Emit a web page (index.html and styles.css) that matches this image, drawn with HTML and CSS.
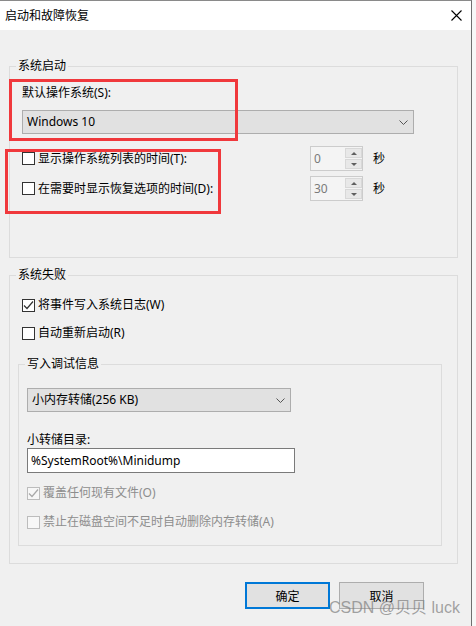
FILE: index.html
```html
<!DOCTYPE html>
<html lang="zh-CN">
<head>
<meta charset="utf-8">
<title>启动和故障恢复</title>
<link rel="stylesheet" href="styles.css">
</head>
<body>
<div class="window">
  <div class="titlebar">
    <span class="title">启动和故障恢复</span>
    <svg class="close" width="11" height="11" viewBox="0 0 11 11"><path d="M0.5 0.5 L10.5 10.5 M10.5 0.5 L0.5 10.5" stroke="#000" stroke-width="1.1" fill="none"/></svg>
  </div>
  <div class="body">
    <fieldset class="group group-startup">
      <legend>系统启动</legend>
      <div class="field-label">默认操作系统(S):</div>
      <div class="select select-os">
        <span>Windows 10</span>
        <svg class="chev" width="9" height="5" viewBox="0 0 9 5"><polyline points="0.5,0.5 4.5,4.5 8.5,0.5" fill="none" stroke="#555" stroke-width="1"/></svg>
      </div>
      <div class="timer-row first">
        <div class="check"><span class="box"></span><span>显示操作系统列表的时间(T):</span></div>
        <div class="spin"><span class="spin-value">0</span><div class="spin-buttons"><span class="spin-btn"><i class="arrow up"></i></span><span class="spin-btn"><i class="arrow down"></i></span></div></div>
        <span class="unit">秒</span>
      </div>
      <div class="timer-row second">
        <div class="check"><span class="box"></span><span>在需要时显示恢复选项的时间(D):</span></div>
        <div class="spin"><span class="spin-value">30</span><div class="spin-buttons"><span class="spin-btn"><i class="arrow up"></i></span><span class="spin-btn"><i class="arrow down"></i></span></div></div>
        <span class="unit">秒</span>
      </div>
    </fieldset>

    <fieldset class="group group-failure">
      <legend>系统失败</legend>
      <div class="check row-w"><span class="box checked"><svg width="11" height="11" viewBox="0 0 11 11"><polyline points="1,5.5 4,8.5 10,1.5" fill="none" stroke="#333" stroke-width="1.2"/></svg></span><span>将事件写入系统日志(W)</span></div>
      <div class="check row-r"><span class="box"></span><span>自动重新启动(R)</span></div>

      <fieldset class="group group-debug">
        <legend>写入调试信息</legend>
        <div class="select select-dump">
          <span>小内存转储(256 KB)</span>
          <svg class="chev" width="9" height="5" viewBox="0 0 9 5"><polyline points="0.5,0.5 4.5,4.5 8.5,0.5" fill="none" stroke="#555" stroke-width="1"/></svg>
        </div>
        <div class="field-label dir-label">小转储目录:</div>
        <div class="textbox">%SystemRoot%\Minidump</div>
        <div class="check disabled row-o"><span class="box checked"><svg width="11" height="11" viewBox="0 0 11 11"><polyline points="1,5.5 4,8.5 10,1.5" fill="none" stroke="#a8a8a8" stroke-width="1.2"/></svg></span><span>覆盖任何现有文件(O)</span></div>
        <div class="check disabled row-a"><span class="box"></span><span>禁止在磁盘空间不足时自动删除内存转储(A)</span></div>
      </fieldset>
    </fieldset>

    <div class="actions">
      <button class="btn btn-primary">确定</button>
      <button class="btn">取消</button>
    </div>
  </div>
  <div class="annot annot-1"></div>
  <div class="annot annot-2"></div>
  <div class="watermark">CSDN @贝贝 luck</div>
</div>
</body>
</html>
```

FILE: styles.css
```css
html, body {
  margin: 0;
  padding: 0;
  background: #f7f7f7;
}
body {
  font-family: "Noto Sans", "Noto Sans CJK SC", sans-serif;
  font-size: 12px;
  line-height: 16px;
  color: #000;
}
.window {
  position: relative;
  width: 472px;
  height: 626px;
  box-sizing: border-box;
  background: #f0f0f0;
  border-top: 1px solid #8a8a8a;
  border-right: 1px solid #6f6f6f;
  overflow: hidden;
}
.titlebar {
  height: 29px;
  background: #fff;
  display: flex;
  align-items: center;
  justify-content: space-between;
  padding: 0 9px 0 5px;
}
.title {
  font-size: 12px;
  line-height: 16px;
}
.close {
  display: block;
}
.body {
  padding: 0 13px 0 9px;
}
.group {
  margin: 0;
  padding: 0;
  border: 1px solid #dcdcdc;
  min-width: 0;
}
.group > legend {
  padding: 0 2px;
  margin-left: -6px;
  line-height: 16px;
  font-size: 12px;
}
.group-startup {
  margin-top: 28px;
  padding: 0 0 56px 12px;
}
.field-label {
  margin-top: 11px;
  line-height: 16px;
}
.select {
  box-sizing: border-box;
  height: 24px;
  background: #e1e1e1;
  border: 1px solid #adadad;
  display: flex;
  align-items: center;
  justify-content: space-between;
  padding: 0 5px 0 4px;
}
.select-os {
  margin-top: 9px;
  width: 392px;
}
.chev {
  display: block;
}
.timer-row {
  display: flex;
  align-items: center;
  height: 25px;
}
.timer-row.first { margin-top: 12px; }
.timer-row.second { margin-top: 5px; }
.timer-row .check {
  width: 288px;
}
.check {
  display: flex;
  align-items: center;
  height: 16px;
  white-space: nowrap;
}
.box {
  box-sizing: border-box;
  width: 13px;
  height: 13px;
  border: 1px solid #333;
  background: #fff;
  margin-right: 3px;
  flex: none;
  display: flex;
  align-items: center;
  justify-content: center;
}
.box svg { display: block; }
.check.disabled { color: #8d8d8d; }
.check.disabled .box {
  border-color: #bcbcbc;
  background: #f7f7f7;
}
.spin {
  box-sizing: border-box;
  width: 53px;
  height: 25px;
  border: 1px solid #cccccc;
  background: #f4f4f4;
  display: flex;
  align-items: stretch;
}
.spin-value {
  flex: 1;
  padding-left: 3px;
  color: #7a7a7a;
  line-height: 23px;
}
.spin-buttons {
  width: 17px;
  display: flex;
  flex-direction: column;
  padding: 1px 0;
  gap: 1px;
}
.spin-btn {
  flex: 1;
  box-sizing: border-box;
  border: 1px solid #d8d8d8;
  background: #e8e8e8;
  display: flex;
  align-items: center;
  justify-content: center;
}
.arrow {
  width: 0;
  height: 0;
  border-left: 3px solid transparent;
  border-right: 3px solid transparent;
}
.arrow.up { border-bottom: 3px solid #606060; }
.arrow.down { border-top: 3px solid #606060; }
.unit {
  margin-left: 10px;
}
.group-failure {
  margin-top: 9px;
  padding: 0 15px 17px 12px;
}
.row-w { margin-top: 14px; }
.row-r { margin-top: 12px; }
.group-debug {
  margin: 15px 0 0 -4px;
  padding: 0 0 15px 8px;
}
.group-debug > legend {
  margin-left: -2px;
}
.select-dump {
  margin-top: 16px;
  width: 264px;
}
.dir-label {
  margin-top: 20px;
}
.textbox {
  box-sizing: border-box;
  width: 268px;
  height: 25px;
  background: #fff;
  border: 1px solid #7a7a7a;
  padding-left: 3px;
  line-height: 23px;
}
.row-o { margin-top: 12px; }
.row-a { margin-top: 13px; }
.actions {
  margin-top: 18px;
  display: flex;
  justify-content: flex-end;
  gap: 9px;
  padding-right: 34px;
}
.btn {
  box-sizing: border-box;
  width: 85px;
  height: 27px;
  margin: 0;
  background: #e1e1e1;
  border: 1px solid #adadad;
  font-family: "Noto Sans", "Noto Sans CJK SC", sans-serif;
  font-size: 12px;
  color: #000;
  padding: 0;
}
.btn-primary {
  border: 2px solid #0078d7;
}
.annot {
  position: absolute;
  box-sizing: border-box;
  border: 3px solid #f0383c;
}
.annot-1 {
  left: 9px;
  top: 78px;
  width: 229px;
  height: 62px;
}
.annot-2 {
  left: 5px;
  top: 148px;
  width: 216px;
  height: 65px;
}
.watermark {
  position: absolute;
  left: 329px;
  top: 597px;
  font-family: "Liberation Sans", "Noto Sans CJK SC", sans-serif;
  font-size: 16px;
  line-height: 20px;
  color: rgba(125, 125, 125, 0.7);
  white-space: nowrap;
}
```
